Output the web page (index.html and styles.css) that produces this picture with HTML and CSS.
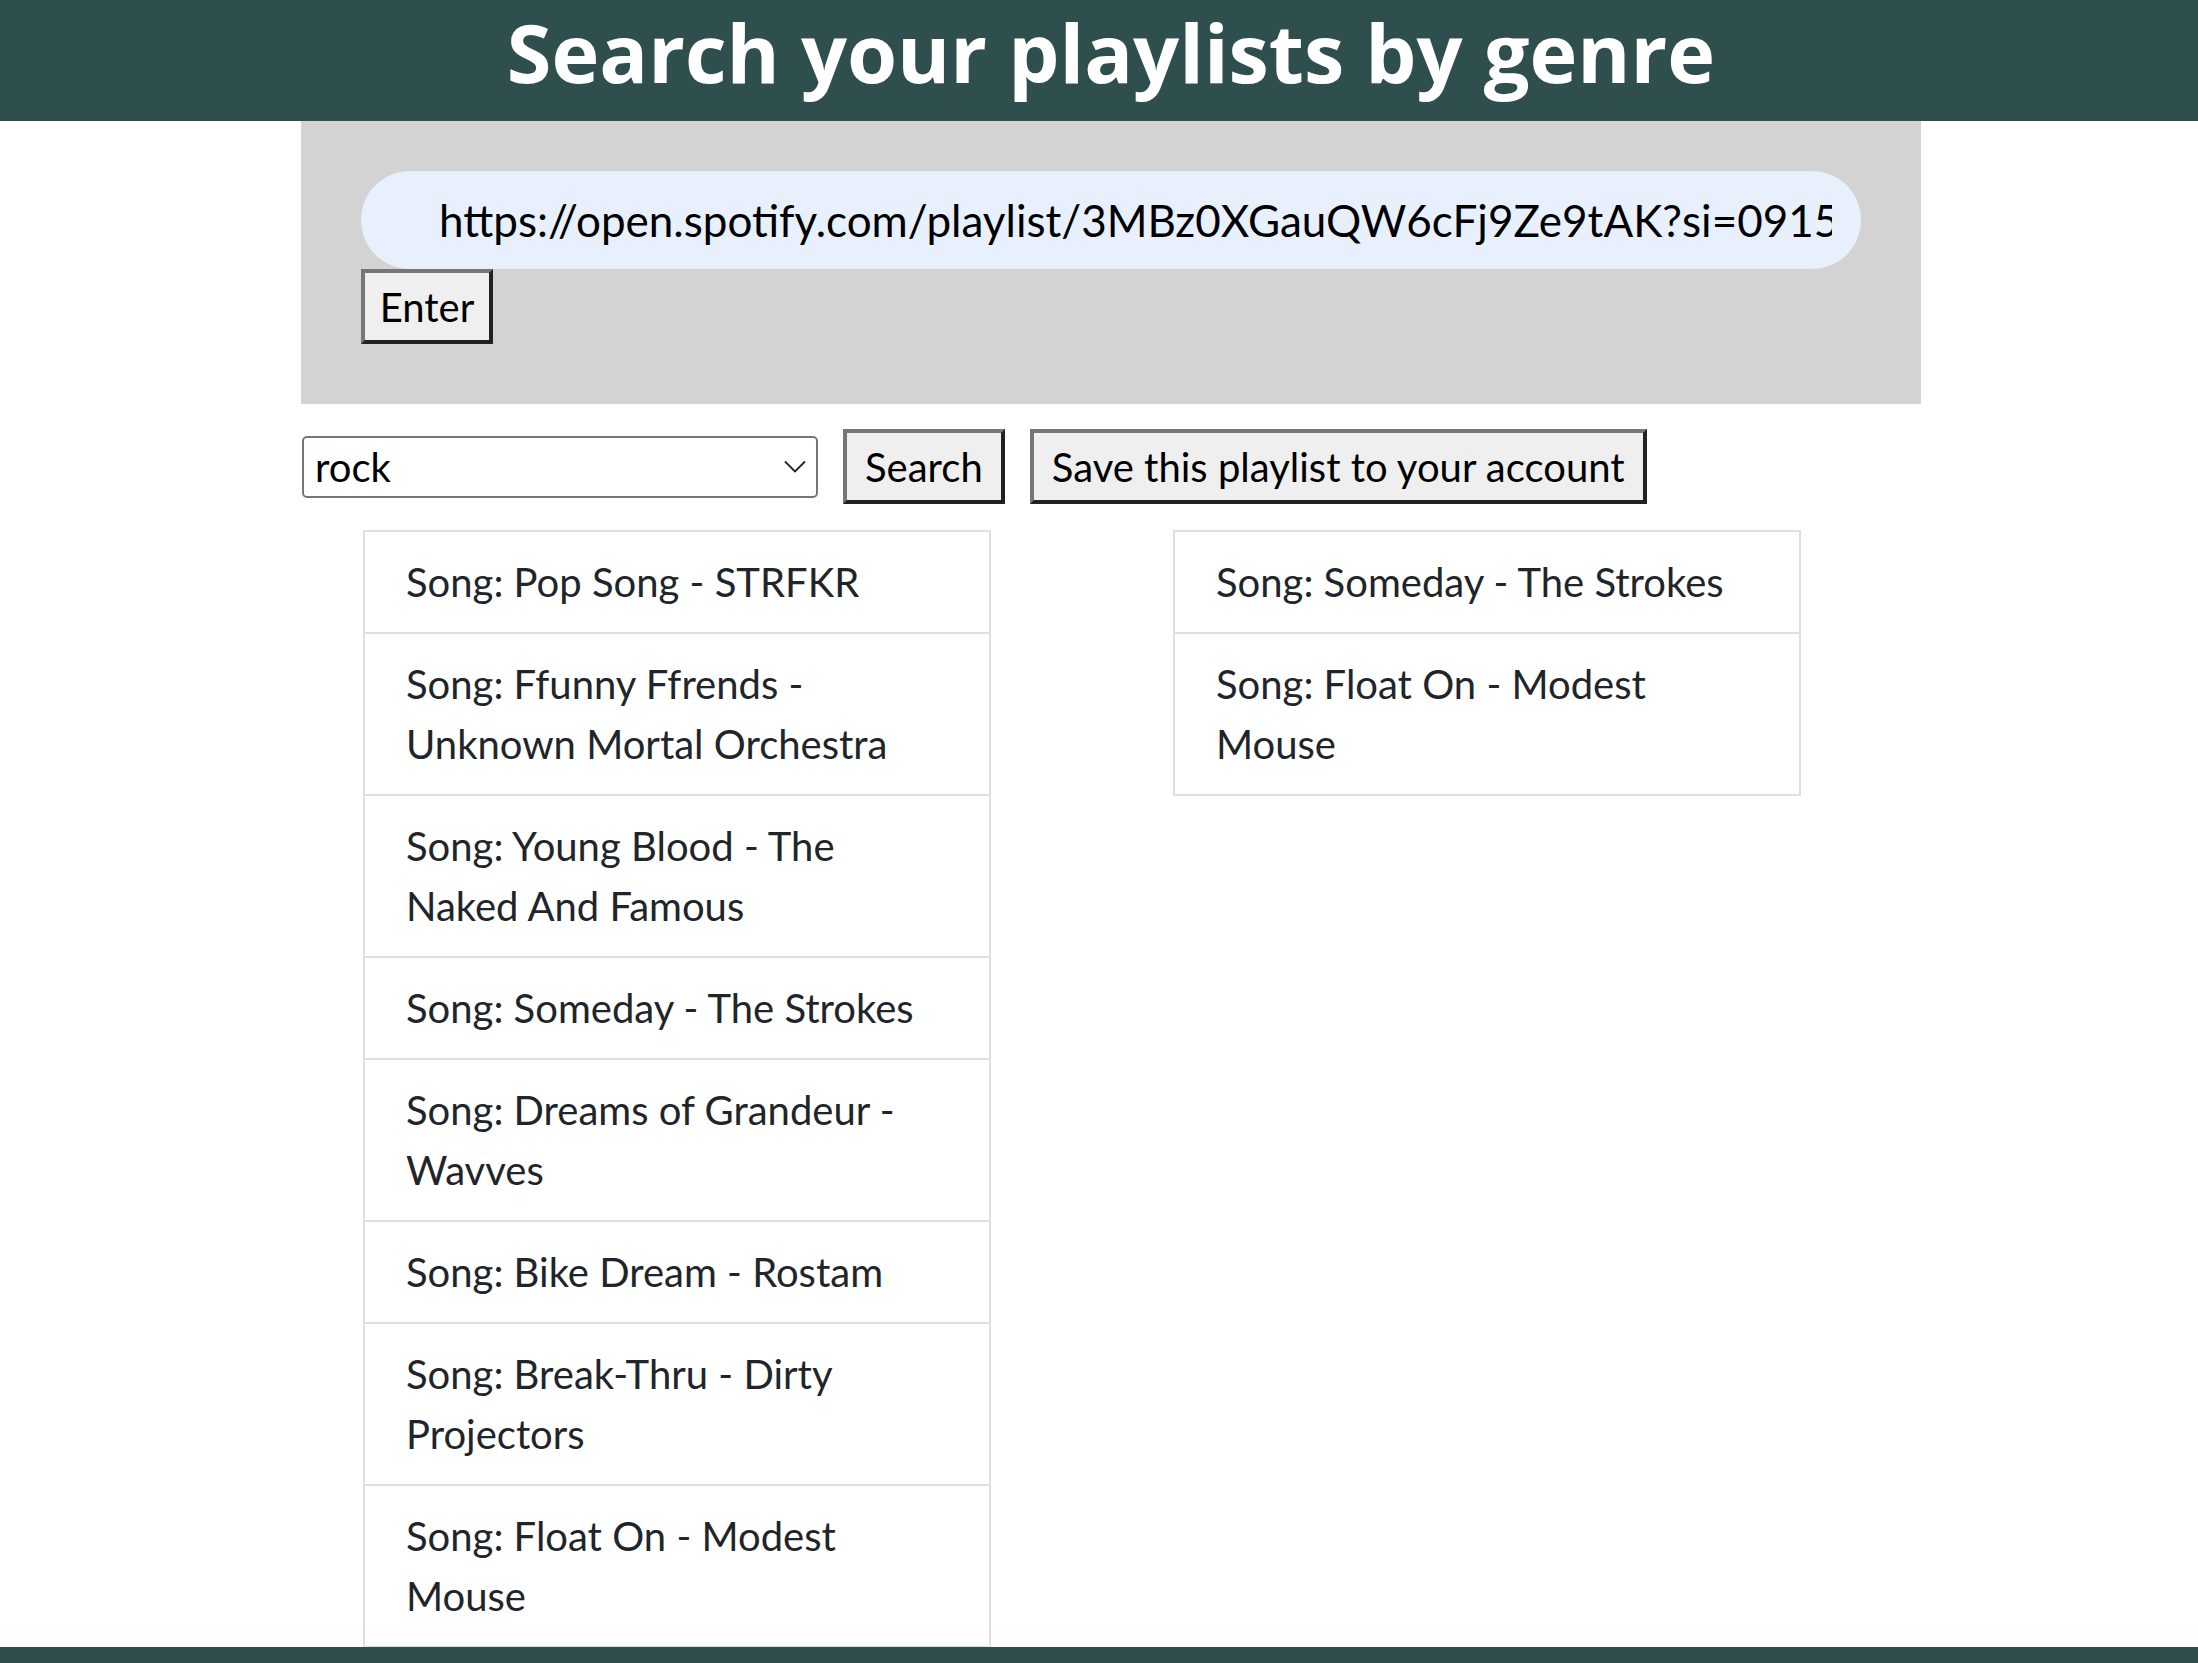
FILE: index.html
```html
<!DOCTYPE html>
<html lang="en">
<head>
<meta charset="utf-8">
<title>Search your playlists by genre</title>
<link rel="stylesheet" href="styles.css">
</head>
<body>
<header class="site-header">
  <h1 class="site-title">Search your playlists by genre</h1>
</header>
<main class="page">
  <div class="container">
    <form class="url-panel">
      <input class="url-input" type="text" value="https://open.spotify.com/playlist/3MBz0XGauQW6cFj9Ze9tAK?si=0915">
      <div><button class="btn btn-enter" type="button">Enter</button></div>
    </form>
    <div class="controls">
      <div class="select-wrap">
        <select class="genre-select">
          <option>rock</option>
          <option>pop</option>
          <option>indie</option>
        </select>
        <svg class="select-chevron" width="22" height="13" viewBox="0 0 22 13"><polyline points="1,1.5 11,11.5 21,1.5" fill="none" stroke="#222" stroke-width="1.8"/></svg>
      </div>
      <button class="btn" type="button">Search</button>
      <button class="btn" type="button">Save this playlist to your account</button>
    </div>
    <div class="results">
      <ul class="song-list">
        <li class="song">Song: Pop Song - STRFKR</li>
        <li class="song">Song: Ffunny Ffrends - Unknown Mortal Orchestra</li>
        <li class="song">Song: Young Blood - The Naked And Famous</li>
        <li class="song">Song: Someday - The Strokes</li>
        <li class="song">Song: Dreams of Grandeur - Wavves</li>
        <li class="song">Song: Bike Dream - Rostam</li>
        <li class="song">Song: Break-Thru - Dirty Projectors</li>
        <li class="song">Song: Float On - Modest Mouse</li>
      </ul>
      <ul class="song-list">
        <li class="song">Song: Someday - The Strokes</li>
        <li class="song">Song: Float On - Modest Mouse</li>
      </ul>
    </div>
  </div>
</main>
<footer class="site-footer"></footer>
</body>
</html>
```
FILE: styles.css
```css
html, body {
  margin: 0;
  padding: 0;
  background: #ffffff;
}

body {
  font-family: "Lato", "Open Sans", sans-serif;
  color: #212529;
  padding-bottom: 16px;
}

.site-header {
  display: flex;
  justify-content: center;
  align-items: flex-start;
  background: #2f4f4f;
  height: 121px;
  box-sizing: border-box;
  padding-left: 24px;
}

.site-title {
  margin: -4px 0 0;
  font-family: "Open Sans", "Lato", sans-serif;
  font-weight: 700;
  font-size: 81px;
  line-height: 112px;
  color: #ffffff;
  text-align: center;
  white-space: nowrap;
}

.page {
  padding-left: 24px;
}

.container {
  width: 1620px;
  margin: 0 auto;
}

.url-panel {
  background: #d3d3d3;
  padding: 50px 60px 60px;
  margin: 0;
}

.url-input {
  display: block;
  box-sizing: border-box;
  width: 1500px;
  height: 98px;
  margin: 0;
  border: none;
  border-radius: 49px;
  background: #e8f0fe;
  padding: 0 29px 0 78px;
  font-family: "Lato", sans-serif;
  font-size: 44px;
  color: #000000;
  outline: none;
}

.btn {
  box-sizing: border-box;
  height: 75px;
  margin: 0;
  padding: 0 18px;
  border-style: solid;
  border-width: 4px;
  border-color: #767676 #222222 #222222 #767676;
  border-radius: 0;
  background: #efefef;
  font-family: "Lato", sans-serif;
  font-size: 40px;
  color: #000000;
  line-height: 1;
}

.btn-enter {
  width: 132px;
  padding: 0;
}

.controls {
  display: flex;
  align-items: center;
  gap: 25px;
  margin-top: 25px;
  padding-left: 1px;
}

.select-wrap {
  position: relative;
  width: 516px;
  height: 62px;
}

.genre-select {
  appearance: none;
  -webkit-appearance: none;
  box-sizing: border-box;
  width: 100%;
  height: 100%;
  margin: 0;
  border: 2px solid #767676;
  border-radius: 5px;
  background: #ffffff;
  padding: 0 50px 0 11px;
  font-family: "Lato", sans-serif;
  font-size: 40px;
  color: #000000;
}

.select-chevron {
  position: absolute;
  right: 12px;
  top: 24px;
  pointer-events: none;
}

.results {
  display: grid;
  grid-template-columns: 810px 810px;
  margin-top: 26px;
  align-items: start;
}

.song-list {
  list-style: none;
  margin: 0 0 0 62px;
  padding: 0;
  width: 628px;
}

.song {
  border: 2px solid #dfdfdf;
  border-top: none;
  padding: 20px 40px 20px 41px;
  font-size: 40px;
  line-height: 60px;
  color: #212529;
}

.song:first-child {
  border-top: 2px solid #dfdfdf;
}

.site-footer {
  position: fixed;
  left: 0;
  right: 0;
  bottom: 0;
  height: 16px;
  background: #2f4f4f;
}
```
